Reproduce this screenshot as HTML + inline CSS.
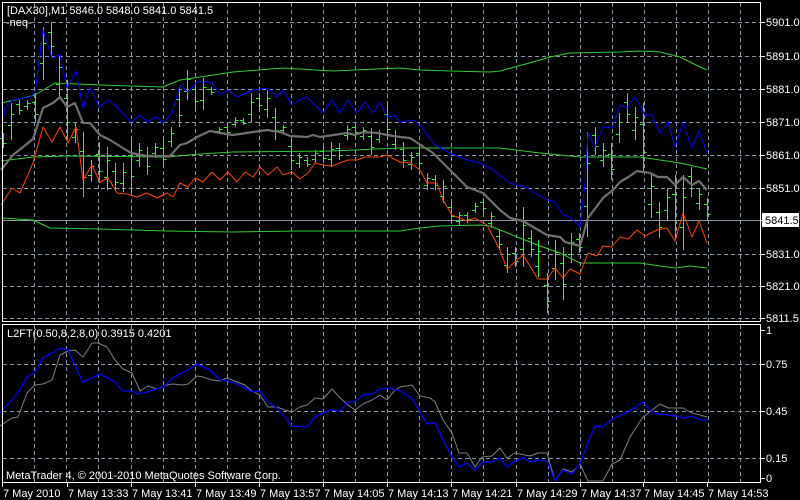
<!DOCTYPE html>
<html><head><meta charset="utf-8"><style>
html,body{margin:0;padding:0;background:#000;width:800px;height:500px;overflow:hidden}
svg{display:block}
text{font-family:"Liberation Sans",sans-serif;font-size:11px;fill:#fff}
</style></head><body>
<svg width="800" height="500" xmlns="http://www.w3.org/2000/svg">
<rect width="800" height="500" fill="#000"/>
<path fill="none" stroke="#8a97a6" stroke-width="1" stroke-dasharray="4,3" d="
M34.5,3V321M66.5,3V321M98.5,3V321M131.5,3V321M163.5,3V321M195.5,3V321M227.5,3V321M259.5,3V321M291.5,3V321M323.5,3V321M355.5,3V321M387.5,3V321M419.5,3V321M451.5,3V321M483.5,3V321M516.5,3V321M548.5,3V321M580.5,3V321M612.5,3V321M644.5,3V321M676.5,3V321M708.5,3V321M740.5,3V321
M34.5,325V482M66.5,325V482M98.5,325V482M131.5,325V482M163.5,325V482M195.5,325V482M227.5,325V482M259.5,325V482M291.5,325V482M323.5,325V482M355.5,325V482M387.5,325V482M419.5,325V482M451.5,325V482M483.5,325V482M516.5,325V482M548.5,325V482M580.5,325V482M612.5,325V482M644.5,325V482M676.5,325V482M708.5,325V482M740.5,325V482
M3,22.5H760M3,56.5H760M3,89.5H760M3,122.5H760M3,155.5H760M3,188.5H760M3,254.5H760M3,286.5H760M3,318.5H760
M3,364.5H760M3,411.5H760M3,458.5H760"/>
<line x1="2" y1="220.5" x2="761" y2="220.5" stroke="#8a97a6" stroke-width="1"/>
<path fill="none" stroke="#33ee33" stroke-width="1" d="
M3.5,133V148M0,138.5h3M3.5,143.5h3
M11.5,103V140M8,125.5h3M11.5,114.5h3
M19.5,100V115M16,104.5h3M19.5,110.5h3
M27.5,100V110M24,106.5h3M27.5,103.5h3
M35.5,93V123M32,102.5h3M35.5,114.5h3
M43.5,27V80M40,63.5h3M43.5,43.5h3
M51.5,22V57M48,32.5h3M51.5,46.5h3
M59.5,55V97M56,84.5h3M59.5,67.5h3
M67.5,80V140M64,98.5h3M67.5,122.5h3
M75.5,123V143M72,137.5h3M75.5,129.5h3
M83.5,132V197M80,151.5h3M83.5,177.5h3
M91.5,160V182M88,175.5h3M91.5,166.5h3
M99.5,142V183M96,154.5h3M99.5,171.5h3
M107.5,147V190M104,177.5h3M107.5,160.5h3
M115.5,163V190M112,171.5h3M115.5,182.5h3
M123.5,163V192M120,183.5h3M123.5,172.5h3
M131.5,140V192M128,155.5h3M131.5,176.5h3
M139.5,143V167M136,160.5h3M139.5,150.5h3
M147.5,147V175M144,155.5h3M147.5,166.5h3
M155.5,143V158M152,153.5h3M155.5,147.5h3
M163.5,140V167M160,148.5h3M163.5,159.5h3
M171.5,127V147M168,141.5h3M171.5,133.5h3
M179.5,87V127M176,99.5h3M179.5,115.5h3
M187.5,70V100M184,91.5h3M187.5,79.5h3
M195.5,80V110M192,89.5h3M195.5,101.5h3
M203.5,78V110M200,100.5h3M203.5,87.5h3
M211.5,87V95M208,89.5h3M211.5,92.5h3
M219.5,127V133M216,131.5h3M219.5,129.5h3
M227.5,123V137M224,127.5h3M227.5,132.5h3
M235.5,117V127M232,124.5h3M235.5,120.5h3
M243.5,118V125M240,120.5h3M243.5,123.5h3
M251.5,93V123M248,114.5h3M251.5,102.5h3
M259.5,93V110M256,98.5h3M259.5,105.5h3
M267.5,90V118M264,109.5h3M267.5,98.5h3
M275.5,108V140M272,117.5h3M275.5,130.5h3
M283.5,125V133M280,130.5h3M283.5,127.5h3
M291.5,137V170M288,146.5h3M291.5,160.5h3
M299.5,153V168M296,163.5h3M299.5,157.5h3
M307.5,157V167M304,160.5h3M307.5,164.5h3
M315.5,150V163M312,159.5h3M315.5,153.5h3
M323.5,147V163M320,151.5h3M323.5,158.5h3
M331.5,142V167M328,159.5h3M331.5,149.5h3
M339.5,143V160M336,148.5h3M339.5,155.5h3
M347.5,125V140M344,135.5h3M347.5,129.5h3
M355.5,123V137M352,127.5h3M355.5,132.5h3
M363.5,127V140M360,136.5h3M363.5,130.5h3
M371.5,128V155M368,136.5h3M371.5,147.5h3
M379.5,130V143M376,139.5h3M379.5,133.5h3
M387.5,103V140M384,114.5h3M387.5,129.5h3
M395.5,130V150M392,144.5h3M395.5,136.5h3
M403.5,142V168M400,149.5h3M403.5,160.5h3
M411.5,152V170M408,164.5h3M411.5,157.5h3
M419.5,147V170M416,153.5h3M419.5,163.5h3
M427.5,173V190M424,185.5h3M427.5,178.5h3
M435.5,175V190M432,179.5h3M435.5,185.5h3
M443.5,180V203M440,196.5h3M443.5,186.5h3
M451.5,202V222M448,207.5h3M451.5,216.5h3
M459.5,212V225M456,221.5h3M459.5,215.5h3
M467.5,212V223M464,215.5h3M467.5,219.5h3
M475.5,203V213M472,210.5h3M475.5,206.5h3
M483.5,198V213M480,202.5h3M483.5,208.5h3
M491.5,212V228M488,223.5h3M491.5,216.5h3
M499.5,230V250M496,236.5h3M499.5,244.5h3
M507.5,247V273M504,265.5h3M507.5,254.5h3
M515.5,247V267M512,253.5h3M515.5,261.5h3
M523.5,207V267M520,249.5h3M523.5,225.5h3
M531.5,230V257M528,238.5h3M531.5,249.5h3
M538.5,240V277M535,266.5h3M538.5,251.5h3
M547.5,273V313M544,285.5h3M547.5,301.5h3
M555.5,240V280M552,268.5h3M555.5,252.5h3
M563.5,247V300M560,263.5h3M563.5,284.5h3
M571.5,233V263M568,254.5h3M571.5,242.5h3
M579.5,233V253M576,239.5h3M579.5,247.5h3
M587.5,132V237M584,206.5h3M587.5,163.5h3
M595.5,127V155M592,135.5h3M595.5,146.5h3
M603.5,143V167M600,160.5h3M603.5,150.5h3
M611.5,143V180M608,154.5h3M611.5,169.5h3
M619.5,113V143M616,134.5h3M619.5,122.5h3
M627.5,93V123M624,102.5h3M627.5,114.5h3
M635.5,107V140M632,130.5h3M635.5,117.5h3
M643.5,103V173M640,124.5h3M643.5,152.5h3
M651.5,173V218M648,204.5h3M651.5,186.5h3
M659.5,202V238M656,212.5h3M659.5,227.5h3
M667.5,188V220M664,210.5h3M667.5,197.5h3
M675.5,175V240M672,194.5h3M675.5,220.5h3
M683.5,175V250M680,227.5h3M683.5,197.5h3
M691.5,167V197M688,176.5h3M691.5,188.5h3
M699.5,188V210M696,203.5h3M699.5,194.5h3
M707.5,198V221M704,204.5h3M707.5,214.5h3"/>
<g fill="none" stroke-linejoin="round">
<polyline stroke="#33cc33" stroke-width="1" points="1,103 20,99 35,95 55,83 100,85 163,87 180,80 233,72 283,68 333,71 400,68 420,70 450,71 490,72 500,71 533,62 550,57 570,53 620,52 640,51 660,52 680,57 700,67 707,70"/>
<polyline stroke="#33cc33" stroke-width="1" points="1,161 33,157 67,156 167,157 200,154 233,152 333,151 400,148 450,148 500,148 540,153 580,157 640,157 680,163 707,169"/>
<polyline stroke="#33cc33" stroke-width="1" points="1,218 33,220 50,228 100,229 167,231 233,232 300,231 400,231 420,228 440,226 480,225 490,226 500,230 520,238 540,246 560,253 580,263 640,263 660,266 675,268 690,266 707,268"/>
<polyline stroke="#0000ff" stroke-width="1" points="1,137 5,107 13,100 30,97 35,93 43,30 52,58 60,55 67,88 76,71 83,108 90,87 99,107 108,100 117,107 131,122 140,115 147,122 157,117 163,123 172,113 180,85 188,92 197,82 212,82 220,95 228,90 237,97 253,90 268,88 277,97 283,90 292,105 300,100 307,97 323,113 332,100 340,113 348,100 357,113 365,102 373,113 380,102 387,117 395,116 400,122 413,120 420,125 435,145 450,153 467,160 480,163 493,170 510,183 527,188 547,200 555,202 563,215 570,217 580,227 585,183 588,133 595,147 603,127 612,128 620,105 627,108 635,97 645,115 652,115 660,133 668,122 675,147 683,123 692,148 699,131 707,153"/>
<polyline stroke="#ff4400" stroke-width="1" points="1,205 12,188 20,193 33,163 43,127 52,142 60,127 68,143 76,127 83,180 92,165 100,182 108,178 117,193 127,194 137,197 147,193 157,198 167,193 173,197 180,183 188,187 195,178 203,182 212,172 220,180 228,172 237,182 245,172 253,177 260,167 268,175 277,167 283,175 292,172 300,179 308,173 315,163 323,165 332,166 340,163 348,160 357,160 365,157 380,157 387,155 400,162 410,163 420,170 427,183 437,183 443,200 452,215 467,221 475,218 487,225 500,250 507,269 523,255 538,279 547,279 555,268 563,278 570,269 580,274 588,253 597,256 603,246 612,247 620,237 628,239 637,230 645,236 657,230 667,228 675,241 683,213 692,237 699,221 707,243"/>
<polyline stroke="#707070" stroke-width="2.2" points="1,170 13,155 33,139 43,108 53,103 60,97 67,107 75,103 83,123 90,123 100,135 110,140 131,153 147,156 170,156 180,145 187,143 197,137 210,131 220,133 233,135 253,132 267,130 280,132 290,136 307,137 313,135 320,137 347,133 355,135 363,132 377,133 387,135 400,137 410,138 433,153 450,170 467,187 483,193 500,210 510,218 523,221 533,227 547,235 560,237 565,242 580,246 588,218 603,198 613,190 620,182 630,176 637,171 650,173 658,177 667,177 675,185 683,177 692,185 699,181 707,190"/>
<polyline stroke="#808080" stroke-width="1" points="0,426 12,418 18,417 27,393 35,385 43,384 52,380 60,355 68,351 75,350 83,357 92,343 98,343 107,347 115,360 123,369 132,373 140,391 148,386 157,389 167,385 173,384 182,385 188,384 197,376 203,377 212,380 220,381 227,378 237,382 245,385 252,391 260,395 268,407 277,407 285,410 292,412 300,407 307,405 315,398 323,399 332,389 340,398 348,405 355,410 363,404 372,400 380,395 387,400 395,390 400,387 412,385 420,396 430,398 435,402 443,420 452,433 459,453 467,453 475,467 482,457 492,456 500,448 507,458 515,453 530,456 538,453 547,453 555,481 563,469 572,472 580,464 588,481 603,481 612,464 620,460 630,437 643,417 660,404 668,408 683,408 692,413 700,415 707,417"/>
<polyline stroke="#0000ff" stroke-width="1.3" points="0,413 10,402 18,393 27,377 35,372 43,358 52,353 60,348 68,350 77,370 83,382 100,374 115,382 123,391 132,391 138,394 147,392 163,387 173,378 182,373 188,370 197,364 203,367 210,370 220,380 228,381 237,384 245,388 252,392 260,391 268,402 277,408 292,426 307,427 315,417 323,413 330,410 340,411 348,402 355,402 363,395 372,394 380,389 388,388 400,391 412,398 420,412 427,424 435,423 443,440 452,457 459,467 467,463 475,470 483,462 492,462 500,458 507,467 515,461 523,458 532,462 538,460 547,461 555,481 563,470 572,474 580,463 588,443 595,426 603,427 612,419 628,412 643,402 653,413 667,415 677,416 683,418 692,416 700,420 707,420"/>
</g>
<g stroke="#fff" stroke-width="1" fill="none">
<rect x="2.5" y="2.5" width="758" height="319"/>
<rect x="2.5" y="324.5" width="758" height="158"/>
<path d="M761,22.5h4M761,56.5h4M761,89.5h4M761,122.5h4M761,155.5h4M761,188.5h4M761,220.5h4M761,254.5h4M761,286.5h4M761,318.5h4M761,330.5h4M761,364.5h4M761,411.5h4M761,458.5h4M761,478.5h4
M2.5,483v4M67.5,483v4M131.5,483v4M195.5,483v4M259.5,483v4M323.5,483v4M387.5,483v4M451.5,483v4M516.5,483v4M580.5,483v4M643.5,483v4M707.5,483v4"/>
</g>
<text x="7" y="14">[DAX30],M1  5846.0 5848.0 5841.0 5841.5</text>
<text x="6" y="26">-neq-</text>
<text x="7" y="337">L2FT(0.50,8,2,8,0) 0.3915 0.4201</text>
<text x="6" y="479">MetaTrader 4, © 2001-2010 MetaQuotes Software Corp.</text>
<g>
<text x="766" y="26">5901.0</text><text x="766" y="60">5891.0</text><text x="766" y="93">5881.0</text><text x="766" y="126">5871.0</text><text x="766" y="159">5861.0</text><text x="766" y="192">5851.0</text><text x="766" y="258">5831.0</text><text x="766" y="290">5821.0</text><text x="766" y="322">5811.5</text>
<text x="766" y="334">1</text><text x="766" y="368">0.75</text><text x="766" y="415">0.45</text><text x="766" y="462">0.15</text><text x="766" y="482">0</text>
<text x="3" y="497">7 May 2010</text><text x="68" y="497">7 May 13:33</text><text x="132" y="497">7 May 13:41</text><text x="196" y="497">7 May 13:49</text><text x="260" y="497">7 May 13:57</text><text x="324" y="497">7 May 14:05</text><text x="388" y="497">7 May 14:13</text><text x="452" y="497">7 May 14:21</text><text x="517" y="497">7 May 14:29</text><text x="581" y="497">7 May 14:37</text><text x="644" y="497">7 May 14:45</text><text x="708" y="497">7 May 14:53</text>
</g>
<rect x="762" y="213" width="37" height="14" fill="#fff"/>
<text x="765" y="224" style="fill:#000">5841.5</text>
</svg>
</body></html>
